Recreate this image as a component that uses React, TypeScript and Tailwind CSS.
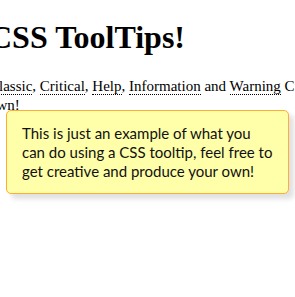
export default function App() {
  const serif = { fontFamily: '"Liberation Serif", "Times New Roman", serif' };
  return (
    <div className="relative h-[297px] w-[295px] overflow-hidden bg-white text-black">
      <div className="ml-[-11px] w-[480px] pt-[19px]" style={serif}>
        <h1 className="text-[32px] font-bold leading-[36px]">CSS ToolTips!</h1>
        <p className="mt-[22px] text-[15px] leading-[19px]">
          <span className="whitespace-nowrap">
            <span className="border-b border-dotted border-black">Classic</span>,{" "}
            <span className="border-b border-dotted border-black">Critical</span>,{" "}
            <span className="border-b border-dotted border-black">Help</span>,{" "}
            <span className="border-b border-dotted border-black">Information</span> and{" "}
            <span className="border-b border-dotted border-black">Warning</span> CSS ToolTips, make
            your
          </span>
          <br />
          own!
        </p>
      </div>

      <div
        className="absolute left-[6px] top-[110px] h-[84px] w-[283px] rounded-[5px] border border-[#ffad33] bg-[#ffffaa] pl-[15px] pt-[13px] text-[15px] leading-[19px] text-[#111] shadow-[5px_5px_5px_rgba(0,0,0,0.12)]"
        style={{ fontFamily: 'Lato, "Noto Sans", sans-serif' }}
      >
        This is just an example of what you
        <br />
        can do using a CSS tooltip, feel free to
        <br />
        get creative and produce your own!
      </div>
    </div>
  );
}
